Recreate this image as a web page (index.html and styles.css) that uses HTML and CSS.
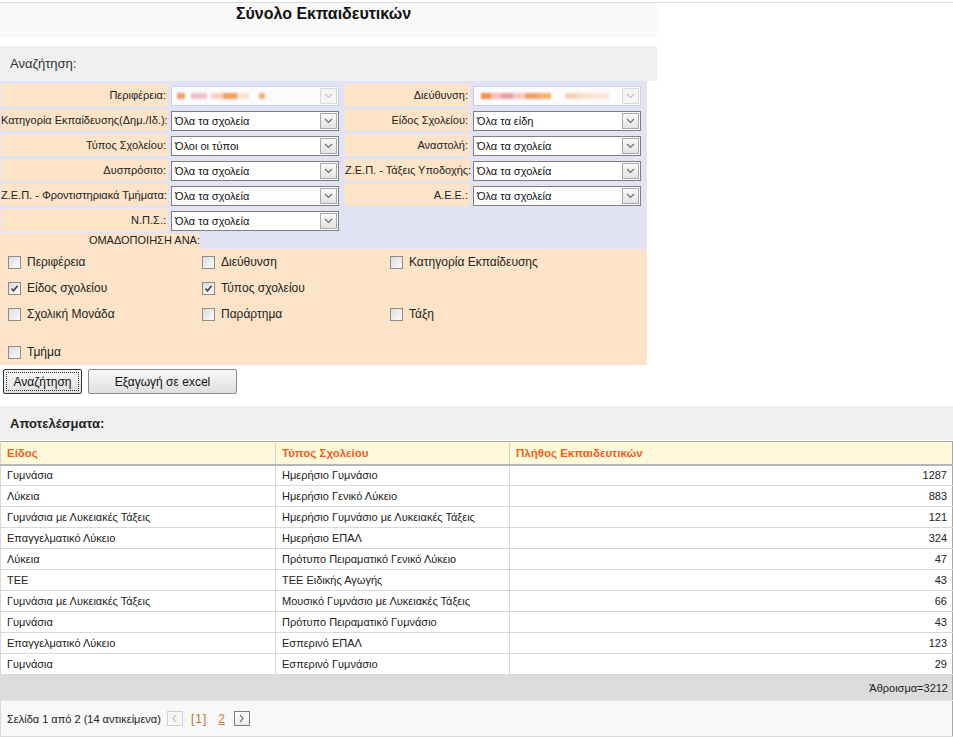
FILE: index.html
```html
<!DOCTYPE html>
<html lang="el">
<head>
<meta charset="utf-8">
<title>Σύνολο Εκπαιδευτικών</title>
<link rel="stylesheet" href="styles.css">
</head>
<body>
<div class="topline"></div>
<div class="title-band"><h1 class="title">Σύνολο Εκπαιδευτικών</h1></div>
<div class="section-bar">Αναζήτηση:</div>

<div class="filters">
  <div class="grid">
    <div class="lbl">Περιφέρεια:</div>
    <div class="fld"><div class="sel disabled"><span class="blur b1"></span><span class="arrow"><svg width="9" height="6" viewBox="0 0 9 6"><path d="M1 1 L4.5 4.5 L8 1" fill="none" stroke="#c4c4c4" stroke-width="1.2"/></svg></span></div></div>
    <div class="lbl">Διεύθυνση:</div>
    <div class="fld"><div class="sel disabled"><span class="blur b2"></span><span class="arrow"><svg width="9" height="6" viewBox="0 0 9 6"><path d="M1 1 L4.5 4.5 L8 1" fill="none" stroke="#c4c4c4" stroke-width="1.2"/></svg></span></div></div>

    <div class="lbl">Κατηγορία Εκπαίδευσης(Δημ./Ιδ.):</div>
    <div class="fld"><div class="sel"><span>Όλα τα σχολεία</span><span class="arrow"><svg width="9" height="6" viewBox="0 0 9 6"><path d="M1 1 L4.5 4.5 L8 1" fill="none" stroke="#6e6e6e" stroke-width="1.2"/></svg></span></div></div>
    <div class="lbl">Είδος Σχολείου:</div>
    <div class="fld"><div class="sel"><span>Όλα τα είδη</span><span class="arrow"><svg width="9" height="6" viewBox="0 0 9 6"><path d="M1 1 L4.5 4.5 L8 1" fill="none" stroke="#6e6e6e" stroke-width="1.2"/></svg></span></div></div>

    <div class="lbl">Τύπος Σχολείου:</div>
    <div class="fld"><div class="sel"><span>Όλοι οι τύποι</span><span class="arrow"><svg width="9" height="6" viewBox="0 0 9 6"><path d="M1 1 L4.5 4.5 L8 1" fill="none" stroke="#6e6e6e" stroke-width="1.2"/></svg></span></div></div>
    <div class="lbl">Αναστολή:</div>
    <div class="fld"><div class="sel"><span>Όλα τα σχολεία</span><span class="arrow"><svg width="9" height="6" viewBox="0 0 9 6"><path d="M1 1 L4.5 4.5 L8 1" fill="none" stroke="#6e6e6e" stroke-width="1.2"/></svg></span></div></div>

    <div class="lbl">Δυσπρόσιτο:</div>
    <div class="fld"><div class="sel"><span>Όλα τα σχολεία</span><span class="arrow"><svg width="9" height="6" viewBox="0 0 9 6"><path d="M1 1 L4.5 4.5 L8 1" fill="none" stroke="#6e6e6e" stroke-width="1.2"/></svg></span></div></div>
    <div class="lbl">Ζ.Ε.Π. - Τάξεις Υποδοχής:</div>
    <div class="fld"><div class="sel"><span>Όλα τα σχολεία</span><span class="arrow"><svg width="9" height="6" viewBox="0 0 9 6"><path d="M1 1 L4.5 4.5 L8 1" fill="none" stroke="#6e6e6e" stroke-width="1.2"/></svg></span></div></div>

    <div class="lbl">Ζ.Ε.Π. - Φροντιστηριακά Τμήματα:</div>
    <div class="fld"><div class="sel"><span>Όλα τα σχολεία</span><span class="arrow"><svg width="9" height="6" viewBox="0 0 9 6"><path d="M1 1 L4.5 4.5 L8 1" fill="none" stroke="#6e6e6e" stroke-width="1.2"/></svg></span></div></div>
    <div class="lbl">Α.Ε.Ε.:</div>
    <div class="fld"><div class="sel"><span>Όλα τα σχολεία</span><span class="arrow"><svg width="9" height="6" viewBox="0 0 9 6"><path d="M1 1 L4.5 4.5 L8 1" fill="none" stroke="#6e6e6e" stroke-width="1.2"/></svg></span></div></div>

    <div class="lbl">Ν.Π.Σ.:</div>
    <div class="fld"><div class="sel"><span>Όλα τα σχολεία</span><span class="arrow"><svg width="9" height="6" viewBox="0 0 9 6"><path d="M1 1 L4.5 4.5 L8 1" fill="none" stroke="#6e6e6e" stroke-width="1.2"/></svg></span></div></div>
    <div class="empty"></div>
    <div class="empty"></div>
  </div>

  <div class="group"><div class="group-label">ΟΜΑΔΟΠΟΙΗΣΗ ΑΝΑ:</div></div>

  <div class="checks">
    <div class="check-row">
      <label class="check"><span class="cb"></span>Περιφέρεια</label>
      <label class="check"><span class="cb"></span>Διεύθυνση</label>
      <label class="check"><span class="cb"></span>Κατηγορία Εκπαίδευσης</label>
    </div>
    <div class="check-row">
      <label class="check"><span class="cb"><svg width="11" height="11" viewBox="0 0 11 11"><path d="M2.5 5.5 L4.5 7.8 L8.6 2.8" fill="none" stroke="#3a3a3a" stroke-width="1.4"/></svg></span>Είδος σχολείου</label>
      <label class="check"><span class="cb"><svg width="11" height="11" viewBox="0 0 11 11"><path d="M2.5 5.5 L4.5 7.8 L8.6 2.8" fill="none" stroke="#3a3a3a" stroke-width="1.4"/></svg></span>Τύπος σχολείου</label>
      <span></span>
    </div>
    <div class="check-row">
      <label class="check"><span class="cb"></span>Σχολική Μονάδα</label>
      <label class="check"><span class="cb"></span>Παράρτημα</label>
      <label class="check"><span class="cb"></span>Τάξη</label>
    </div>
    <div class="check-row last">
      <label class="check"><span class="cb"></span>Τμήμα</label>
    </div>
  </div>
</div>

<div class="buttons">
  <button class="btn btn-search"><span class="focus-ring">Αναζήτηση</span></button>
  <button class="btn btn-excel">Εξαγωγή σε excel</button>
</div>

<div class="results-bar">Αποτελέσματα:</div>

<table class="results">
  <colgroup><col class="c1"><col class="c2"><col></colgroup>
  <thead>
    <tr><th>Είδος</th><th>Τύπος Σχολείου</th><th>Πλήθος Εκπαιδευτικών</th></tr>
  </thead>
  <tbody>
    <tr><td>Γυμνάσια</td><td>Ημερήσιο Γυμνάσιο</td><td class="num">1287</td></tr>
    <tr><td>Λύκεια</td><td>Ημερήσιο Γενικό Λύκειο</td><td class="num">883</td></tr>
    <tr><td>Γυμνάσια με Λυκειακές Τάξεις</td><td>Ημερήσιο Γυμνάσιο με Λυκειακές Τάξεις</td><td class="num">121</td></tr>
    <tr><td>Επαγγελματικό Λύκειο</td><td>Ημερήσιο ΕΠΑΛ</td><td class="num">324</td></tr>
    <tr><td>Λύκεια</td><td>Πρότυπο Πειραματικό Γενικό Λύκειο</td><td class="num">47</td></tr>
    <tr><td>ΤΕΕ</td><td>ΤΕΕ Ειδικής Αγωγής</td><td class="num">43</td></tr>
    <tr><td>Γυμνάσια με Λυκειακές Τάξεις</td><td>Μουσικό Γυμνάσιο με Λυκειακές Τάξεις</td><td class="num">66</td></tr>
    <tr><td>Γυμνάσια</td><td>Πρότυπο Πειραματικό Γυμνάσιο</td><td class="num">43</td></tr>
    <tr><td>Επαγγελματικό Λύκειο</td><td>Εσπερινό ΕΠΑΛ</td><td class="num">123</td></tr>
    <tr><td>Γυμνάσια</td><td>Εσπερινό Γυμνάσιο</td><td class="num">29</td></tr>
  </tbody>
  <tfoot>
    <tr class="total"><td colspan="3">Άθροισμα=3212</td></tr>
    <tr class="pager"><td colspan="3">
      <div class="pager-inner">
        <span>Σελίδα 1 από 2 (14 αντικείμενα)</span>
        <span class="nav disabled"><svg width="7" height="9" viewBox="0 0 7 9"><path d="M5 1 L2 4.5 L5 8" fill="none" stroke="#b8b8b8" stroke-width="1.1"/></svg></span>
        <span class="cur">[1]</span>
        <span class="page">2</span>
        <span class="nav"><svg width="7" height="9" viewBox="0 0 7 9"><path d="M2 1 L5 4.5 L2 8" fill="none" stroke="#555" stroke-width="1.1"/></svg></span>
      </div>
    </td></tr>
  </tfoot>
</table>
</body>
</html>
```

FILE: styles.css
```css
* { box-sizing: border-box; }

body {
  margin: 0;
  font-family: "Liberation Sans", Arial, sans-serif;
  color: #222;
  background: #fff;
}

.topline {
  height: 3px;
  border-bottom: 1px solid #dcdcdc;
}

.title-band {
  width: 657px;
  height: 35px;
  background: #f9f9f9;
  padding-top: 2px;
}

.title {
  margin: 0;
  width: 647px;
  text-align: center;
  font-size: 16px;
  line-height: 18px;
  font-weight: bold;
  color: #111;
}

.section-bar {
  width: 657px;
  margin-top: 8px;
  height: 35px;
  line-height: 36px;
  background: #efefef;
  padding-left: 10px;
  font-size: 13px;
  color: #333;
}

.filters {
  width: 647px;
  background: #e2e2f5;
  padding-top: 3px;
}

.grid {
  display: grid;
  grid-template-columns: 167px 177px 125px 173px;
  grid-auto-rows: 22px;
  row-gap: 3px;
  padding-left: 1px;
}

.lbl {
  background: #fde4c9;
  font-size: 11px;
  text-align: right;
  padding-right: 2px;
  line-height: 23px;
  white-space: nowrap;
  color: #222;
}

.fld {
  display: flex;
  align-items: center;
  padding-left: 3px;
  padding-top: 1px;
}

.sel {
  width: 168px;
  height: 20px;
  border: 1px solid #7f7f7f;
  background: #fff;
  display: flex;
  align-items: center;
  justify-content: space-between;
  font-size: 11px;
  padding-left: 3px;
  color: #111;
}

.sel.disabled {
  border-color: #cfd0e0;
  background: #fbfbfd;
}

.arrow {
  width: 17px;
  height: 16px;
  margin-right: 1px;
  border: 1px solid #a9a9a9;
  background: linear-gradient(#f9f9f9, #e3e3e3);
  display: flex;
  align-items: center;
  justify-content: center;
}

.sel.disabled .arrow {
  border-color: #dadada;
  background: #f4f4f4;
}

.blur {
  display: block;
  height: 6px;
  margin-left: 2px;
  filter: blur(0.8px);
}

.b1 {
  width: 88px;
  background: linear-gradient(90deg,
    #f0a070 0 8px, #fff 8px 14px, #f4c0c8 14px 30px, #fff 30px 34px,
    #f8d0c0 34px 46px, #f0a060 46px 60px, #fde0d0 60px 72px, #fff 72px 82px, #f0b070 82px 88px);
}

.b2 {
  width: 128px;
  margin-left: 4px;
  background: linear-gradient(90deg,
    #f09050 0 10px, #f8c0b0 10px 20px, #e8a0a8 20px 32px, #f8c8c0 32px 44px,
    #f0a070 44px 58px, #f8b070 58px 70px, #fff 70px 84px, #fad0b0 84px 96px,
    #f8e0d0 96px 112px, #fbe6d8 112px 128px);
}

.group {
  display: flex;
  margin-top: 2px;
  height: 16px;
}

.group-label {
  width: 200px;
  background: #fde4c9;
  font-size: 11px;
  text-align: right;
  line-height: 15px;
  color: #222;
}

.checks {
  background: #fde4c9;
}

.check-row {
  display: grid;
  grid-template-columns: 194px 188px 1fr;
  height: 26px;
  align-items: center;
  padding-left: 8px;
}

.check-row.last {
  margin-top: 12px;
}

.check {
  display: flex;
  align-items: center;
  gap: 6px;
  font-size: 12px;
  color: #222;
}

.cb {
  width: 13px;
  height: 13px;
  border: 1px solid #8c8c8c;
  background: linear-gradient(135deg, #dcdcdc, #fbfbfb);
  display: flex;
  align-items: center;
  justify-content: center;
}

.buttons {
  display: flex;
  gap: 6px;
  padding-left: 3px;
  margin-top: 4px;
}

.btn {
  height: 25px;
  font-family: "Liberation Sans", Arial, sans-serif;
  font-size: 12px;
  color: #111;
  border: 1px solid #8b8b8b;
  border-radius: 2px;
  background: linear-gradient(#f8f8f8, #dfdfdf);
  padding: 0;
}

.btn-search {
  width: 79px;
  border-color: #333;
  padding: 2px;
}

.focus-ring {
  display: flex;
  align-items: center;
  justify-content: center;
  height: 100%;
  border: 1px dotted #333;
}

.btn-excel {
  width: 149px;
}

.results-bar {
  margin-top: 12px;
  height: 34px;
  line-height: 35px;
  background: #efefef;
  padding-left: 10px;
  font-size: 13px;
  font-weight: bold;
  color: #222;
}

.results {
  margin-top: 1px;
  width: 953px;
  border-collapse: collapse;
  table-layout: fixed;
  border: 1px solid #a8a8a8;
  font-size: 11px;
}

.c1 { width: 275px; }
.c2 { width: 234px; }

.results th {
  background: #fff9da;
  color: #ee5f1c;
  text-align: left;
  font-weight: bold;
  font-size: 11.5px;
  height: 23px;
  padding: 0 6px;
  border-bottom: 2px solid #b6b6b6;
  border-left: 1px solid #d4d4d4;
}

.results td {
  height: 21px;
  padding: 0 6px;
  border-bottom: 1px solid #d8d8d8;
  border-left: 1px solid #d8d8d8;
  color: #222;
  white-space: nowrap;
}

.results td.num {
  text-align: right;
  padding-right: 5px;
}

.results .total td {
  background: #dcdcdc;
  height: 26px;
  text-align: right;
  padding-right: 4px;
  border-bottom: 1px solid #e6e6e6;
}

.results .pager td {
  background: #f8f8f8;
  height: 36px;
  padding-left: 6px;
}

.pager-inner {
  display: flex;
  align-items: center;
  font-size: 11px;
  color: #222;
}

.nav {
  width: 16px;
  height: 15px;
  border: 1px solid #7d7d7d;
  background: linear-gradient(#fdfdfd, #ececec);
  display: flex;
  align-items: center;
  justify-content: center;
  margin-left: 9px;
}

.nav.disabled {
  border-color: #cfcfcf;
  background: #f6f6f6;
  margin-left: 6px;
}

.cur {
  margin-left: 6px;
  color: #c0722e;
  font-size: 12px;
  padding: 0 2px;
  letter-spacing: 1px;
}

.page {
  margin-left: 9px;
  color: #e07a2a;
  text-decoration: underline;
  font-size: 12px;
}
```
